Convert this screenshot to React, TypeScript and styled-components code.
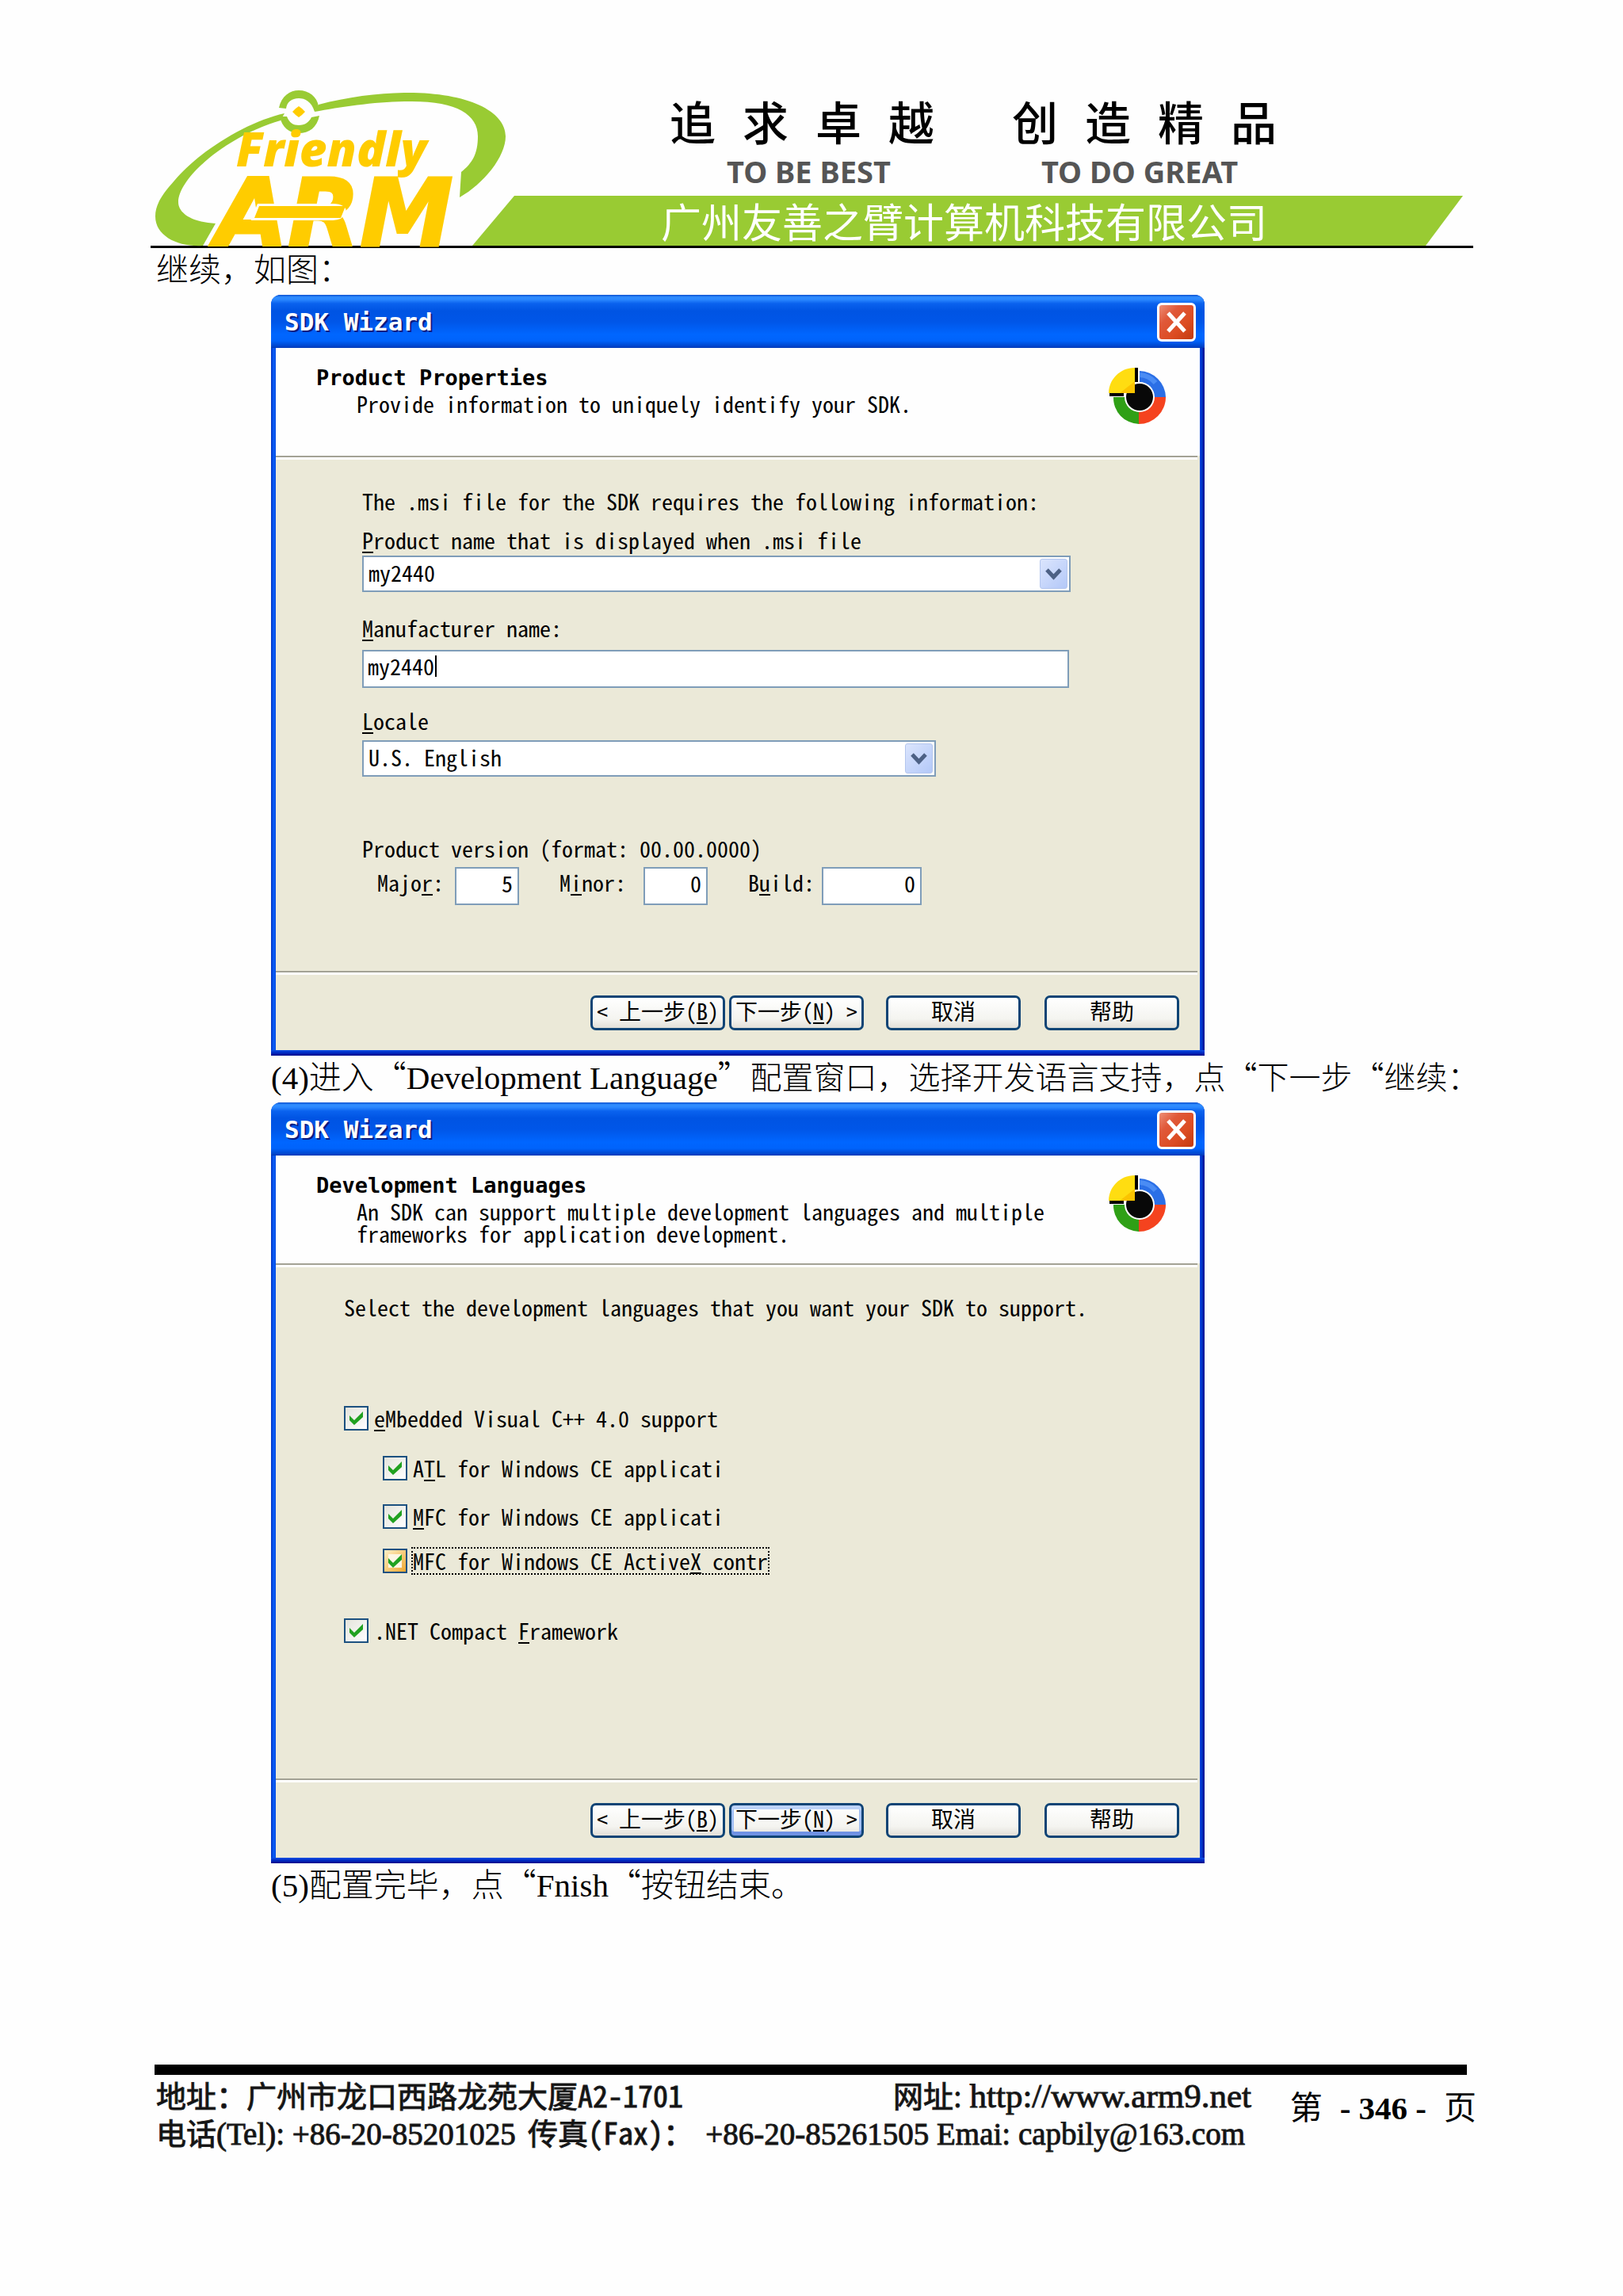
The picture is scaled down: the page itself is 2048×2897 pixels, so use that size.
import React, { useId, useState } from "react";
import styled, { createGlobalStyle } from "styled-components";

const UI = `"Noto Sans Mono CJK SC", "DejaVu Sans Mono", "Noto Sans CJK SC", monospace`;
const UI_BOLD = `"DejaVu Sans Mono", "Noto Sans CJK SC", monospace`;
const SERIF = `"Liberation Serif", "Noto Sans CJK SC", serif`;
const HEI = `"Noto Sans CJK SC", sans-serif`;

const GlobalStyle = createGlobalStyle`
  *, *::before, *::after { box-sizing: border-box; }
  body { margin: 0; background: #fefefe; color: #000; }
  button, input, select { font: inherit; color: inherit; margin: 0; }
`;

const Page = styled.div`
  padding: 110px 189px 120px 190px;
  font-family: ${SERIF};
`;

/* ---------- letterhead ---------- */

const Letterhead = styled.header`
  display: flex;
  align-items: flex-end;
  border-bottom: 3px solid #000;
`;

const LogoSvg = styled.svg`
  flex: none;
  width: 460px;
  height: 200px;
  margin-right: -54px;
  overflow: visible;
`;

const Masthead = styled.div`
  flex: 1;
  display: flex;
  flex-direction: column;
  margin-right: 13px;
`;

const Slogan = styled.div`
  display: flex;
  gap: 98px;
  padding-left: 249px;
  font: 500 58px/60px ${HEI};
`;

const SloganPart = styled.div`
  display: flex;
  gap: 34px;
`;

const Motto = styled.div`
  display: flex;
  gap: 190px;
  padding: 13px 0 10px 321px;
  font: 700 38px/42px "Noto Sans", sans-serif;
  color: #555;
  white-space: nowrap;
`;

const Banner = styled.div`
  height: 63px;
  padding-left: 238px;
  background: #99cb33;
  clip-path: polygon(53px 0, 100% 0, calc(100% - 47px) 100%, 0 100%);
  color: #fff;
  font: 400 51px/63px ${HEI};
  white-space: nowrap;
`;

/* ---------- running text ---------- */

const Line = styled.p<{ $indent?: boolean }>`
  margin: 0;
  height: 59px;
  padding-left: ${(p) => (p.$indent ? 152 : 7)}px;
  font: 300 41px/57px ${SERIF};
  white-space: nowrap;
`;

const Cjk = styled.span`
  font-family: ${HEI};
  line-height: 0;
`;

const Tail = styled.span`
  font-size: 40px;
  line-height: 0;
`;

/* ---------- dialog ---------- */

const Window = styled.section`
  width: 100%;
  max-width: 1178px;
  margin-left: 152px;
  display: flex;
  flex-direction: column;
  border-radius: 12px 12px 0 0;
  overflow: hidden;
  background: linear-gradient(90deg, #0030c0 0, #0b5cf5 3px, #0b5cf5 4px, #0048e0 6px, #0048e0 calc(100% - 6px), #0038d0 calc(100% - 4px), #00108c 100%);
  font: 400 28px/28px ${UI};
`;

const TitleBar = styled.div`
  height: 67px;
  display: flex;
  align-items: center;
  justify-content: space-between;
  padding: 1px 11px 0 17px;
  background: linear-gradient(180deg, #0a4fd0 0, #2f8dff 3px, #2a87ff 6px, #0a62ee 11px, #0054e3 20px, #0056e8 34px, #0066ff 50px, #0063fb 58px, #0040c4 66px, #0036b0 67px);
`;

const TitleText = styled.h2`
  margin: 0;
  color: #fff;
  font: 700 31px/36px ${UI_BOLD};
  text-shadow: 2px 2px 0 #0a1c80;
`;

const CloseButton = styled.button`
  width: 49px;
  height: 49px;
  padding: 0;
  display: grid;
  place-items: center;
  border: 3px solid #fff;
  border-radius: 6px;
  background: linear-gradient(135deg, #ee8f76 0, #e0593a 30%, #dc4c22 65%, #c23a10 100%);
`;

const Client = styled.div`
  margin: 0 6px;
  background: #ebe9d8;
`;

const Header = styled.div`
  height: 136px;
  display: flex;
  justify-content: space-between;
  align-items: flex-start;
  padding: 24px 42px 0 51px;
  background: #fefefe;
`;

const HeaderTitle = styled.h3`
  margin: 0;
  font: 700 27px/28px ${UI_BOLD};
`;

const HeaderText = styled.p`
  margin: 4px 0 0 51px;
`;

const Rule = styled.div`
  height: 5px;
  margin-right: 3px;
  background: #fff;
  border-top: 2px solid #a3a295;
`;

const Body = styled.div<{ $left: number; $top: number }>`
  height: 645px;
  padding: ${(p) => p.$top}px 0 0 ${(p) => p.$left}px;
  white-space: nowrap;
`;

const Actions = styled.div`
  height: 95px;
  display: flex;
  justify-content: flex-end;
  padding: 26px 26px 0 0;
`;

const BottomEdge = styled.div`
  height: 7px;
  background: linear-gradient(180deg, #0c50e4 0, #0028c0 50%, #000c88 100%);
`;

const PushButton = styled.button<{ $gap?: number; $default?: boolean }>`
  width: 170px;
  height: 44px;
  margin-left: ${(p) => p.$gap ?? 0}px;
  padding: 0 0 6px;
  display: flex;
  align-items: center;
  justify-content: center;
  border: 3px solid #0f4475;
  border-radius: 7px;
  background: linear-gradient(180deg, #fff 0, #f4f4f0 70%, #e2dfd8 100%);
  box-shadow: ${(p) =>
    p.$default ? "inset 0 5px 0 #bcd2f8, inset 0 -5px 0 #6f92e4, inset 3px 0 0 #a3c0f4, inset -3px 0 0 #a3c0f4" : "none"};
  white-space: pre;
`;

const Key = styled.span`
  text-decoration: underline;
  text-decoration-thickness: 2px;
  text-underline-offset: 3px;
`;

/* ---------- form parts ---------- */

const Field = styled.div<{ $before: number; $gap: number }>`
  display: flex;
  flex-direction: column;
  align-items: flex-start;
  gap: ${(p) => p.$gap}px;
  margin-top: ${(p) => p.$before}px;
`;

const TextBox = styled.input<{ $width: number; $right?: boolean }>`
  width: ${(p) => p.$width}px;
  height: 48px;
  padding: 0 6px 8px 5px;
  border: 2px solid #7f9db9;
  border-radius: 0;
  outline: none;
  background: #fff;
  text-align: ${(p) => (p.$right ? "right" : "left")};
`;

const CaretBox = styled.div`
  position: relative;
`;

const Caret = styled.span`
  position: absolute;
  left: 92px;
  top: 7px;
  width: 2px;
  height: 27px;
  background: #000;
`;

const SelectBox = styled.div<{ $width: number }>`
  position: relative;
  width: ${(p) => p.$width}px;
`;

const Select = styled.select`
  appearance: none;
  display: block;
  width: 100%;
  height: 46px;
  padding: 0 44px 4px 6px;
  border: 2px solid #7f9db9;
  border-radius: 0;
  background: #fff;
  line-height: 38px;
`;

const Arrow = styled.span`
  position: absolute;
  top: 4px;
  right: 4px;
  width: 35px;
  height: 38px;
  display: grid;
  place-items: center;
  border-radius: 3px;
  border: 1px solid #b4c6ee;
  background: linear-gradient(135deg, #dbe5fd, #b3c8f8);
  pointer-events: none;
`;

const Versions = styled.div`
  display: grid;
  grid-template-columns: 98px 132px 106px 132px 93px 126px;
  margin: 10px 0 0 19px;
`;

const VersionLabel = styled.label`
  padding-top: 5px;
`;

const CheckRow = styled.label<{ $before: number; $nested?: boolean }>`
  display: flex;
  align-items: center;
  gap: 7px;
  height: 31px;
  margin-top: ${(p) => p.$before}px;
  margin-left: ${(p) => (p.$nested ? 49 : 0)}px;
`;

const CheckCell = styled.span`
  display: grid;
  place-items: center;
  width: 31px;
  height: 31px;
  & > * { grid-area: 1 / 1; }
  & > svg { pointer-events: none; z-index: 1; }
`;

const CheckInput = styled.input<{ $hot?: boolean }>`
  appearance: none;
  width: 31px;
  height: 31px;
  border: 2px solid #1c5180;
  background: ${(p) =>
    p.$hot
      ? "linear-gradient(#fdf6e4, #fdf6e4) center / 17px 17px no-repeat, linear-gradient(135deg, #fff0c8, #f0a830)"
      : "linear-gradient(135deg, #e4e4dc, #fff)"};
`;

const CheckText = styled.span<{ $focus?: boolean }>`
  height: 31px;
  line-height: 31px;
  outline: ${(p) => (p.$focus ? "2px dotted #000" : "none")};
`;

/* ---------- page foot ---------- */

const Foot = styled.footer`
  margin: 195px 8px 0 5px;
  border-top: 13px solid #000;
  padding-top: 2px;
  display: flex;
  justify-content: space-between;
  align-items: center;
`;

const Contact = styled.div`
  flex: none;
  width: 1384px;
  padding-left: 2px;
  color: #111;
  -webkit-text-stroke: 1px #222;
`;

const ContactLine = styled.div<{ $inset?: boolean }>`
  display: flex;
  justify-content: space-between;
  align-items: baseline;
  height: 47px;
  padding-right: ${(p) => (p.$inset ? 8 : 0)}px;
  font: 400 39px/47px ${SERIF};
  white-space: nowrap;
`;

const Big = styled.a`
  color: inherit;
  text-decoration: none;
  font-size: 43px;
  line-height: 0;
`;

const Mail = styled.a`
  color: inherit;
  text-decoration: none;
`;

const Hei = styled.span`
  font: 400 38px/46px "Noto Sans Mono CJK SC", ${HEI};
  span > & { line-height: 0; }
`;

const PageNumber = styled.div`
  display: flex;
  gap: 22px;
  margin: 0 -12px 14px 0;
  font: 400 41px/46px ${SERIF};
  white-space: nowrap;
  & > b { font-weight: 700; }
`;

/* ---------- drawings ---------- */

function Logo() {
  return (
    <LogoSvg viewBox="0 0 460 200" role="img" aria-label="FriendlyARM">
      <g fill="#99cb33">
        <path d="M212 22 C250 12 290 7 325 7 C400 7 448 30 448 62 C448 88 420 122 390 139 L392 107 C406 96 413 84 413 62 C413 34 385 17 325 18 C285 18 240 25 207 31 Z" />
        <path d="M169 33 C120 44 60 82 30 118 C12 138 6 150 6 163 C6 188 35 202 66 200 L82 172 C50 170 35 158 35 145 C35 115 95 62 164 42 Z" />
        <path d="M162 26 C165 11 176 4 187 4 C200 4 210 12 212 24 L207 31 C203 18 195 14 187 14 C178 14 172 19 171 27 Z" />
        <path d="M163 37 L172 37 C175 45 180 48 187 48 C195 48 200 44 203 38 L213 36 C210 51 200 58 187 58 C175 58 166 51 163 37 Z" />
      </g>
      <g fill="#fc0">
        <path d="M187 24 L191 27 L195 31 L191 35 L187 38 L183 35 L179 31 L183 27 Z" />
        <text x="108" y="100" fontFamily="Open Sans, sans-serif" fontWeight="800" fontStyle="italic" fontSize="60">Friendly</text>
        <text x="82" y="200" fontFamily="DejaVu Sans, sans-serif" fontWeight="700" fontStyle="italic" fontSize="118" stroke="#fc0" strokeWidth="3">ARM</text>
        <path d="M137 150 H230 C240 150 246 154 243 158 C241 163 237 165 230 165 H131 Z" stroke="#fff" strokeWidth="6" />
        <path d="M137 150 H246 L240 165 H131 Z" />
      </g>
    </LogoSvg>
  );
}

function Wheel() {
  return (
    <svg width="73" height="73" viewBox="0 0 73 73" aria-hidden="true">
      <path d="M39 5 A34 34 0 0 1 72 38 H39 Z" fill="#2b6fe6" />
      <path d="M39 10 A28 28 0 0 1 59 20" stroke="#4a8cf4" strokeWidth="6" fill="none" />
      <path d="M72 38 A34 34 0 0 1 38 72 V38 Z" fill="#f5431f" />
      <path d="M38 72 A33 33 0 0 1 6 38 H38 Z" fill="#2fa016" />
      <circle cx="39" cy="38" r="19" fill="#fff" />
      <circle cx="39" cy="38" r="17" fill="#080808" />
      <path d="M33 1 H37 V19 H33 Z M1 33 H19 V37 H1 Z" fill="#000" />
      <path d="M33 1 V33 H0 C0 16 14 1 33 1 Z" fill="#fd1" />
      <path d="M33 18 V33 H14 Z" fill="#fbc400" />
    </svg>
  );
}

function Cross() {
  return (
    <svg width="29" height="29" viewBox="0 0 29 29" aria-hidden="true">
      <path d="M4 3 L25 26 M25 3 L4 26" stroke="#fff" strokeWidth="5" />
    </svg>
  );
}

function Check() {
  return (
    <svg width="19" height="19" viewBox="0 0 19 19" aria-hidden="true">
      <path d="M1 6 L7 12 L18 1 V8 L7 18 L1 12 Z" fill="#21a121" />
    </svg>
  );
}

function Chevron() {
  return (
    <svg width="21" height="15" viewBox="0 0 21 15" aria-hidden="true">
      <path d="M2 2 L10.5 11 L19 2" stroke="#4d6185" strokeWidth="5" fill="none" />
    </svg>
  );
}

/* ---------- composed parts ---------- */

function Dialog(props: {
  title: string;
  text: React.ReactNode;
  left: number;
  top: number;
  nextDefault?: boolean;
  children: React.ReactNode;
}) {
  return (
    <Window aria-label={props.title}>
      <TitleBar>
        <TitleText>SDK Wizard</TitleText>
        <CloseButton type="button" aria-label="Close">
          <Cross />
        </CloseButton>
      </TitleBar>
      <Client>
        <Header>
          <div>
            <HeaderTitle>{props.title}</HeaderTitle>
            <HeaderText>{props.text}</HeaderText>
          </div>
          <Wheel />
        </Header>
        <Rule />
        <Body $left={props.left} $top={props.top}>
          {props.children}
        </Body>
        <Rule />
        <Actions>
          <PushButton type="button">
            {"< 上一步("}
            <Key>B</Key>)
          </PushButton>
          <PushButton type="button" $gap={5} $default={props.nextDefault}>
            下一步(<Key>N</Key>
            {") >"}
          </PushButton>
          <PushButton type="button" $gap={28}>取消</PushButton>
          <PushButton type="button" $gap={30}>帮助</PushButton>
        </Actions>
      </Client>
      <BottomEdge />
    </Window>
  );
}

function Combo(props: { id: string; width: number; value: string }) {
  return (
    <SelectBox $width={props.width}>
      <Select id={props.id} defaultValue={props.value}>
        <option>{props.value}</option>
      </Select>
      <Arrow>
        <Chevron />
      </Arrow>
    </SelectBox>
  );
}

function CheckItem(props: { before: number; nested?: boolean; hot?: boolean; children: React.ReactNode }) {
  const [on, setOn] = useState(true);
  return (
    <CheckRow $before={props.before} $nested={props.nested}>
      <CheckCell>
        <CheckInput type="checkbox" checked={on} onChange={() => setOn(!on)} $hot={props.hot} />
        {on && <Check />}
      </CheckCell>
      <CheckText $focus={props.hot}>{props.children}</CheckText>
    </CheckRow>
  );
}

export default function App() {
  const id = useId();
  return (
    <Page lang="zh-CN">
      <GlobalStyle />
      <Letterhead>
        <Logo />
        <Masthead>
          <Slogan>
            {["追求卓越", "创造精品"].map((part) => (
              <SloganPart key={part}>
                {part.split("").map((c) => (
                  <span key={c}>{c}</span>
                ))}
              </SloganPart>
            ))}
          </Slogan>
          <Motto>
            <span>TO BE BEST</span>
            <span>TO DO GREAT</span>
          </Motto>
          <Banner>广州友善之臂计算机科技有限公司</Banner>
        </Masthead>
      </Letterhead>

      <main>
        <Line>继续，如图：</Line>
        <Dialog title="Product Properties" text="Provide information to uniquely identify your SDK." left={109} top={38}>
          <div>The .msi file for the SDK requires the following information:</div>
          <Field $before={21} $gap={6}>
            <label htmlFor={id + "name"}>
              <Key>P</Key>roduct name that is displayed when .msi file
            </label>
            <Combo id={id + "name"} width={894} value="my2440" />
          </Field>
          <Field $before={31} $gap={14}>
            <label htmlFor={id + "maker"}>
              <Key>M</Key>anufacturer name:
            </label>
            <CaretBox>
              <TextBox id={id + "maker"} $width={892} defaultValue="my2440" />
              <Caret />
            </CaretBox>
          </Field>
          <Field $before={27} $gap={11}>
            <label htmlFor={id + "locale"}>
              <Key>L</Key>ocale
            </label>
            <Combo id={id + "locale"} width={724} value="U.S. English" />
          </Field>
          <Field $before={76} $gap={0}>
            <div>Product version (format: 00.00.0000)</div>
            <Versions>
              <VersionLabel htmlFor={id + "major"}>
                Majo<Key>r</Key>:
              </VersionLabel>
              <TextBox id={id + "major"} $width={81} $right defaultValue="5" />
              <VersionLabel htmlFor={id + "minor"}>
                M<Key>i</Key>nor:
              </VersionLabel>
              <TextBox id={id + "minor"} $width={81} $right defaultValue="0" />
              <VersionLabel htmlFor={id + "build"}>
                B<Key>u</Key>ild:
              </VersionLabel>
              <TextBox id={id + "build"} $width={126} $right defaultValue="0" />
            </Versions>
          </Field>
        </Dialog>

        <Line $indent>
          (4)进入<Cjk>“</Cjk>Development Language<Cjk>”</Cjk>
          <Tail>
            配置窗口，选择开发语言支持，点<Cjk>“</Cjk>下一步<Cjk>“</Cjk>继续：
          </Tail>
        </Line>
        <Dialog
          title="Development Languages"
          text={
            <>
              An SDK can support multiple development languages and multiple
              <br />
              frameworks for application development.
            </>
          }
          left={86}
          top={36}
          nextDefault
        >
          <div>Select the development languages that you want your SDK to support.</div>
          <CheckItem before={111}>
            <Key>e</Key>Mbedded Visual C++ 4.0 support
          </CheckItem>
          <CheckItem before={32} nested>
            A<Key>T</Key>L for Windows CE applicati
          </CheckItem>
          <CheckItem before={30} nested>
            <Key>M</Key>FC for Windows CE applicati
          </CheckItem>
          <CheckItem before={25} nested hot>
            MFC for Windows CE Active<Key>X</Key> contr
          </CheckItem>
          <CheckItem before={57}>
            .NET Compact <Key>F</Key>ramework
          </CheckItem>
        </Dialog>
        <Line $indent>
          (5)配置完毕，点<Cjk>“</Cjk>Fnish<Cjk>“</Cjk>按钮结束。
        </Line>
      </main>

      <Foot>
        <Contact>
          <ContactLine>
            <Hei>地址：广州市龙口西路龙苑大厦A2-1701</Hei>
            <span>
              <Hei>网址</Hei>: <Big href="http://www.arm9.net">http://www.arm9.net</Big>
            </span>
          </ContactLine>
          <ContactLine $inset>
            <span>
              <Hei>电话</Hei>(Tel): +86-20-85201025
            </span>
            <Hei>传真(Fax)：</Hei>
            <span>
              +86-20-85261505 Emai: <Mail href="mailto:capbily@163.com">capbily@163.com</Mail>
            </span>
          </ContactLine>
        </Contact>
        <PageNumber>
          <span>第</span>
          <b>- 346 -</b>
          <span>页</span>
        </PageNumber>
      </Foot>
    </Page>
  );
}
